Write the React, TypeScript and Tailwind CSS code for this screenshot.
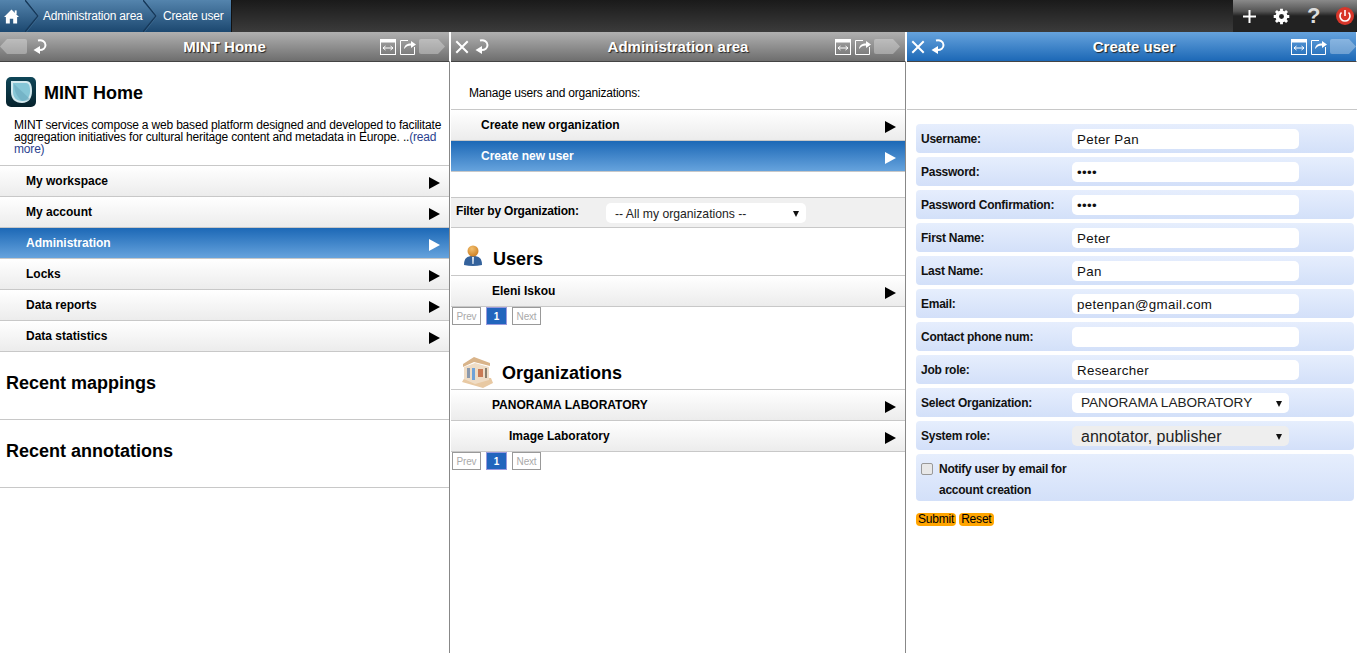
import type { ReactNode } from "react";

const arial = "font-['Liberation_Sans',Arial,sans-serif]";

function HomeIcon() {
  return (
    <svg width="15" height="15" viewBox="0 0 16 15" fill="#fff">
      <path d="M8 0 L16 8 L14 8 L14 15 L9.8 15 L9.8 10 L6.2 10 L6.2 15 L2 15 L2 8 L0 8 Z" />
      <rect x="11.5" y="1" width="2" height="4" />
    </svg>
  );
}

function Chevron() {
  return (
    <svg width="14" height="32" viewBox="0 0 14 32" className="shrink-0">
      <path d="M0 0 L13 16 L0 32" fill="none" stroke="#17395a" strokeWidth="1.5" />
      <path d="M1.5 0 L14 16 L1.5 32" fill="none" stroke="#5f8bb2" strokeWidth="0.7" opacity="0.5" />
    </svg>
  );
}

function CloseIcon() {
  return (
    <svg width="14" height="14" viewBox="0 0 14 14" stroke="#fff" strokeWidth="2" strokeLinecap="square">
      <path d="M2 2 L12 12 M12 2 L2 12" />
    </svg>
  );
}

function RefreshIcon() {
  return (
    <svg width="15" height="15" viewBox="0 0 15 15" fill="none">
      <path d="M6 1.5 C10 0.5 13.5 2.5 13.5 6 C13.5 9 11 11 7.5 11" stroke="#fff" strokeWidth="2" />
      <path d="M8 7 L8 15 L1.5 11 Z" fill="#fff" />
    </svg>
  );
}

function ExpandIcon() {
  return (
    <svg width="16" height="16" viewBox="0 0 16 16" fill="none">
      <rect x="0.5" y="0.5" width="15" height="15" stroke="#fff" />
      <rect x="0.5" y="0.5" width="15" height="3" fill="#fff" />
      <path d="M3 9 H13 M3 9 L5.5 7 M3 9 L5.5 11 M13 9 L10.5 7 M13 9 L10.5 11" stroke="#fff" />
    </svg>
  );
}

function ShareIcon() {
  return (
    <svg width="16" height="16" viewBox="0 0 16 16" fill="none">
      <path d="M8 1.5 H0.5 V15.5 H14.5 V8" stroke="#fff" />
      <path d="M4 10 C4.5 6 7 4.5 11 4.5 V2 L16 5.5 L11 9 V6.5 C8 6.5 6 7.5 4 10 Z" fill="#fff" />
    </svg>
  );
}

function PrevTag() {
  return (
    <svg width="27" height="15" viewBox="0 0 27 15" fill="#fff" opacity="0.3">
      <path d="M0 7.5 L7 0 H25 Q27 0 27 2 V13 Q27 15 25 15 H7 Z" />
    </svg>
  );
}

function NextTag() {
  return (
    <svg width="26" height="15" viewBox="0 0 26 15" fill="#fff" opacity="0.3">
      <path d="M26 7.5 L19 0 H2 Q0 0 0 2 V13 Q0 15 2 15 H19 Z" />
    </svg>
  );
}

function Arrow({ white = false }: { white?: boolean }) {
  return (
    <svg width="11" height="12" viewBox="0 0 11 12" fill={white ? "#fff" : "#000"}>
      <path d="M0 0 L11 6 L0 12 Z" />
    </svg>
  );
}

function Caret() {
  return (
    <svg width="6" height="6" viewBox="0 0 6 6" fill="#111">
      <path d="M0 0 H6 L3 6 Z" />
    </svg>
  );
}

function PanelHeader({
  title,
  active = false,
  first = false,
  titleShift = "",
  tagGap = "mr-[4px]",
}: {
  title: string;
  active?: boolean;
  first?: boolean;
  titleShift?: string;
  tagGap?: string;
}) {
  const bg = active
    ? "bg-[linear-gradient(#66a3dd,#1c68b6)]"
    : "bg-[linear-gradient(#b0b0b0,#6e6e6e)]";
  return (
    <div className={`grid h-[30px] shrink-0 grid-cols-[1fr_auto_1fr] items-center border-r border-b border-r-white border-b-[#444] ${bg}`}>
      {first ? (
        <div className="flex items-center">
          <div className="mr-[5px]">
            <PrevTag />
          </div>
          <RefreshIcon />
        </div>
      ) : (
        <div className="flex items-center pl-[4px]">
          <div className="mr-[5px]">
            <CloseIcon />
          </div>
          <RefreshIcon />
        </div>
      )}
      <div className={`pt-[2px] text-center text-[15px] font-bold text-white [text-shadow:1px_1px_1px_#222] ${titleShift}`}>{title}</div>
      <div className="flex items-center justify-end gap-[4px]">
        <ExpandIcon />
        <ShareIcon />
        <div className={`-ml-[1px] ${tagGap}`}>
          <NextTag />
        </div>
      </div>
    </div>
  );
}

function MenuRow({
  label,
  active = false,
  indent = "pl-[26px]",
}: {
  label: string;
  active?: boolean;
  indent?: string;
}) {
  const bg = active
    ? "bg-[linear-gradient(#1c68b6,#66a3dd)] text-white"
    : "bg-[linear-gradient(#ffffff,#ececec)] text-black";
  return (
    <div className={`flex h-[31px] items-center justify-between border-b border-[#c8c8c8] pr-[9px] text-[12px] font-bold ${indent} ${bg}`}>
      <span className="-mt-[1px]">{label}</span>
      <span className="mt-[3px]">
        <Arrow white={active} />
      </span>
    </div>
  );
}

function Pager() {
  return (
    <div className="flex h-[19px] items-start gap-[5px] pl-[1px] text-[10px] tracking-[-0.2px]">
      <span className="flex h-[18px] w-[29px] items-center justify-center border border-[#999] text-[#aaa]">Prev</span>
      <span className="flex h-[18px] w-[21px] items-center justify-center border border-[#9999dd] bg-[#2265bd] font-bold text-white">1</span>
      <span className="flex h-[18px] w-[29px] items-center justify-center border border-[#999] text-[#aaa]">Next</span>
    </div>
  );
}

function FormRow({ label, children }: { label: ReactNode; children?: ReactNode }) {
  return (
    <div className="flex h-[29px] items-center rounded-[4px] bg-[linear-gradient(#e6eefd,#d3e0f9)] pl-[5px]">
      <div className="w-[151px] shrink-0 text-[12px] font-bold tracking-[-0.25px] text-[#111]">{label}</div>
      {children}
    </div>
  );
}

function TextBox({ value }: { value?: string }) {
  return (
    <div className="flex h-[20px] w-[227px] items-center rounded-[5px] bg-white pt-[2px] pl-[5px] text-[13.33px] tracking-[0.3px] text-[#111]">{value}</div>
  );
}

function SelectBox({
  value,
  bg = "bg-white",
  size = "text-[13.6px]",
  w = "w-[217px]",
  pl = "pl-[9px]",
}: {
  value: string;
  bg?: string;
  size?: string;
  w?: string;
  pl?: string;
}) {
  return (
    <div className={`flex h-[20px] items-center justify-between rounded-[5px] pt-[2px] pr-[7px] text-[#222] ${w} ${bg} ${size} ${pl}`}>
      <span>{value}</span>
      <Caret />
    </div>
  );
}

function UserIcon() {
  return (
    <svg width="18" height="21" viewBox="0 0 18 21">
      <defs>
        <radialGradient id="head" cx="0.4" cy="0.3" r="0.8">
          <stop offset="0" stopColor="#f2bf6e" />
          <stop offset="1" stopColor="#c9791c" />
        </radialGradient>
      </defs>
      <path d="M0 20 C0 13 3 11 9 11 C15 11 18 13 18 20 Q9 22 0 20 Z" fill="#34629c" />
      <path d="M8 12 H10 L9.6 19 H8.4 Z" fill="#dfe8f2" />
      <circle cx="9" cy="6" r="5.5" fill="url(#head)" />
    </svg>
  );
}

function BuildingIcon() {
  return (
    <svg width="32" height="31" viewBox="0 0 32 31">
      <path d="M1 25 L22 31 L32 26 L30 21 L4 20 Z" fill="#e8c9a3" />
      <path d="M2 7 L13 0 L29 6 L29 9 L13 5 L2 10 Z" fill="#d9b48a" />
      <path d="M3 10 L14 6 L28 10 L28 23 L14 27 L3 22 Z" fill="#efdcc5" />
      <rect x="6" y="11" width="3" height="10" fill="#8a99ad" />
      <rect x="11" y="11" width="3" height="12" fill="#6fa2d8" />
      <rect x="17" y="12" width="5" height="8" fill="#c97a55" />
      <rect x="24" y="11" width="2" height="10" fill="#8a8070" />
    </svg>
  );
}

function MintLogo() {
  return (
    <svg width="30" height="30" viewBox="0 0 30 30">
      <defs>
        <linearGradient id="tile" x1="0" y1="0" x2="0" y2="1">
          <stop offset="0" stopColor="#0f4658" />
          <stop offset="1" stopColor="#06222c" />
        </linearGradient>
      </defs>
      <rect width="30" height="30" rx="5" fill="url(#tile)" />
      <path d="M5 4 H20 C25 4 26 9 26 14 C26 21 23 26 16 26 C9 26 5 22 5 15 Z" fill="#d4e9ee" />
      <path d="M7 6 H20 C23.5 6 24 10 24 14 C24 20 21 24 16 24 C10 24 7 20 7 15 Z" fill="#86c6d6" />
      <path d="M8 7 L24 22 C21 24 18 24 16 24 C11 20 8 14 8 7 Z" fill="#6aa9bc" opacity="0.6" />
    </svg>
  );
}

export default function App() {
  const divider = "border-b border-[#c8c8c8]";
  return (
    <div className={`flex h-[653px] w-[1357px] flex-col overflow-hidden bg-white text-black ${arial}`}>
      {/* top bar */}
      <div className="flex h-[32px] shrink-0 justify-between bg-[linear-gradient(#1a1a1a,#3b3b3b)]">
        <div className="flex h-full w-[232px] items-center border-r border-[#111] bg-[linear-gradient(#5484ad,#1c4870)] text-[12px] tracking-[-0.2px] text-white">
          <div className="flex w-[25px] pl-[4px]">
            <HomeIcon />
          </div>
          <Chevron />
          <span className="ml-[4px] w-[100px] whitespace-nowrap">Administration area</span>
          <Chevron />
          <span className="ml-[6px] whitespace-nowrap">Create user</span>
        </div>
        <div className="flex h-full w-[124px] items-center bg-[linear-gradient(#8a8a8a,#555_35%,#222_50%,#222)] pl-[10px]">
          <svg width="13" height="13" viewBox="0 0 13 13" fill="#fff">
            <rect x="5.5" y="0" width="2" height="13" />
            <rect x="0" y="5.5" width="13" height="2" />
          </svg>
          <svg width="17" height="17" viewBox="0 0 24 24" className="ml-[17px]" fill="none" stroke="#fff">
            <circle cx="12" cy="12" r="6" strokeWidth="5" />
            <path d="M12 1 V5 M12 19 V23 M1 12 H5 M19 12 H23 M4.2 4.2 L7 7 M17 17 L19.8 19.8 M4.2 19.8 L7 17 M17 7 L19.8 4.2" strokeWidth="4" />
          </svg>
          <span className="ml-[17px] w-[12px] text-[22px] leading-none font-bold text-[#ddd]">?</span>
          <svg width="18" height="18" viewBox="0 0 18 18" className="ml-[17px]">
            <circle cx="9" cy="9" r="9" fill="#d8362a" />
            <path d="M5.5 5.5 A5 5 0 1 0 12.5 5.5" fill="none" stroke="#fff" strokeWidth="1.6" />
            <rect x="8.2" y="3" width="1.6" height="6" fill="#fff" />
          </svg>
        </div>
      </div>

      <div className="flex min-h-0 flex-1">
        {/* MINT Home */}
        <div className="flex w-[450px] shrink-0 flex-col">
          <PanelHeader title="MINT Home" first />
          <div className="flex flex-1 flex-col border-r border-[#888]">
            <div className="flex items-center gap-[8px] pt-[15px] pl-[6px]">
              <MintLogo />
              <h1 className="pt-[2px] text-[18px] font-bold">MINT Home</h1>
            </div>
            <p className={`mt-[11px] h-[48px] pt-[1px] pr-[4px] pl-[14px] text-[12px] leading-[12px] tracking-[-0.18px] ${divider}`}>
              MINT services compose a web based platform designed and developed to facilitate aggregation initiatives for cultural heritage content and metadata in Europe. ..<span className="text-[#2b3f8f]">(read</span> <span className="text-[#2b3f8f]">more)</span>
            </p>
            <MenuRow label="My workspace" />
            <MenuRow label="My account" />
            <MenuRow label="Administration" active />
            <MenuRow label="Locks" />
            <MenuRow label="Data reports" />
            <MenuRow label="Data statistics" />
            <div className={`h-[68px] pt-[22px] pl-[6px] text-[18px] leading-[18px] font-bold ${divider}`}>Recent mappings</div>
            <div className={`h-[68px] pt-[22px] pl-[6px] text-[18px] leading-[18px] font-bold ${divider}`}>Recent annotations</div>
          </div>
        </div>

        {/* Administration area */}
        <div className="flex w-[456px] shrink-0 flex-col pl-[1px]">
          <PanelHeader title="Administration area" tagGap="mr-[5px]" />
          <div className="flex flex-1 flex-col border-r border-[#888]">
            <div className={`h-[48px] pt-[22px] pl-[18px] text-[12px] tracking-[-0.2px] ${divider}`}>Manage users and organizations:</div>
            <MenuRow label="Create new organization" indent="pl-[30px]" />
            <MenuRow label="Create new user" active indent="pl-[30px]" />
            <div className={`mt-[25px] flex h-[31px] border-t border-[#c8c8c8] bg-[#f0f0f0] ${divider}`}>
              <span className="w-[155px] pt-[4px] pl-[5px] text-[12px] font-bold tracking-[-0.2px]">Filter by Organization:</span>
              <div className="pt-[5px]">
                <SelectBox value="-- All my organizations --" size="text-[12.2px]" w="w-[200px]" />
              </div>
            </div>
            <div className={`flex h-[48px] items-start pt-[17px] pl-[13px] ${divider}`}>
              <UserIcon />
              <h2 className="mt-[1px] ml-[11px] text-[18px] font-bold">Users</h2>
            </div>
            <MenuRow label="Eleni Iskou" indent="pl-[41px]" />
            <Pager />
            <div className={`mt-[29px] flex h-[35px] items-start pl-[10px] ${divider}`}>
              <div className="mt-[2px]">
                <BuildingIcon />
              </div>
              <h2 className="mt-[5px] ml-[9px] text-[18px] font-bold">Organizations</h2>
            </div>
            <MenuRow label="PANORAMA LABORATORY" indent="pl-[41px]" />
            <MenuRow label="Image Laboratory" indent="pl-[58px]" />
            <Pager />
          </div>
        </div>

        {/* Create user */}
        <div className="flex min-w-0 flex-1 flex-col pl-[1px]">
          <PanelHeader title="Create user" active titleShift="ml-[5px]" tagGap="mr-0" />
          <div className={`h-[48px] ${divider}`} />
          <form className="flex flex-col gap-[4px] pt-[14px] pr-[3px] pl-[9px]">
            <FormRow label="Username:"><TextBox value="Peter Pan" /></FormRow>
            <FormRow label="Password:"><TextBox value="••••" /></FormRow>
            <FormRow label="Password Confirmation:"><TextBox value="••••" /></FormRow>
            <FormRow label="First Name:"><TextBox value="Peter" /></FormRow>
            <FormRow label="Last Name:"><TextBox value="Pan" /></FormRow>
            <FormRow label="Email:"><TextBox value="petenpan@gmail.com" /></FormRow>
            <FormRow label="Contact phone num:"><TextBox /></FormRow>
            <FormRow label="Job role:"><TextBox value="Researcher" /></FormRow>
            <FormRow label="Select Organization:"><SelectBox value="PANORAMA LABORATORY" /></FormRow>
            <FormRow label="System role:"><SelectBox value="annotator, publisher" bg="bg-[#eeeeee]" size="text-[16px]" /></FormRow>
            <div className="flex h-[47px] rounded-[4px] bg-[linear-gradient(#e6eefd,#d3e0f9)] pl-[5px]">
              <span className="mt-[9px] h-[12px] w-[12px] rounded-[2px] border border-[#999] bg-[#e8e8e8]" />
              <span className="ml-[6px] w-[140px] pt-[5px] text-[12px] leading-[21px] font-bold tracking-[-0.25px] text-[#111]">
                Notify user by email for account creation
              </span>
            </div>
            <div className="mt-[8px] flex gap-[3px] text-[12px] leading-[13px] tracking-[-0.2px]">
              <span className="rounded-[4px] bg-[#ffa500] px-[2px]">Submit</span>
              <span className="rounded-[4px] bg-[#ffa500] px-[2px]">Reset</span>
            </div>
          </form>
        </div>
      </div>
    </div>
  );
}
